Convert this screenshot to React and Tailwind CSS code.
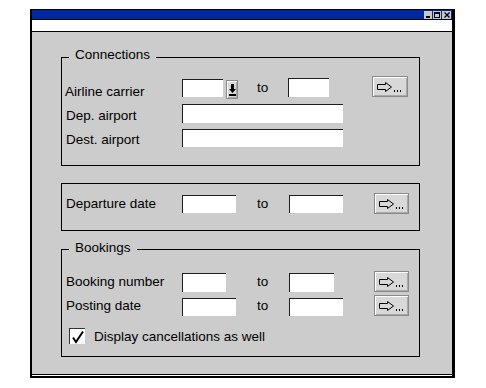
import React from "react";

function Field({ className }) {
  return <div className={"bg-white border-t border-l border-[#1e1e1e] shrink-0 " + className} />;
}

function ArrowBtn({ className = "" }) {
  return (
    <div
      className={
        "h-[21px] bg-[#d8d8d8] border border-[#8a8a8a] shadow-[inset_1px_1px_0_#ffffff,inset_-1px_-1px_0_#a9a9a9] flex items-start pl-[4px] pt-[5px] shrink-0 " +
        className
      }
    >
      <svg width="28" height="11" viewBox="0 0 28 11" shapeRendering="crispEdges">
        <path
          d="M0.5 2.5 H8.5 V0.5 L14.5 5 L8.5 9.5 V7.5 H0.5 Z"
          fill="none"
          stroke="#000"
          strokeWidth="1"
          shapeRendering="auto"
        />
        <rect x="17" y="8" width="1" height="2" fill="#000" />
        <rect x="20" y="8" width="1" height="2" fill="#000" />
        <rect x="23" y="8" width="1" height="2" fill="#000" />
      </svg>
    </div>
  );
}

function DropBtn() {
  return (
    <div className="ml-[3px] mb-[-2px] w-[12px] h-[19px] bg-[#d8d8d8] border border-[#8a8a8a] shadow-[inset_1px_1px_0_#ffffff,inset_-1px_-1px_0_#a9a9a9] flex items-center justify-center shrink-0">
      <svg width="7" height="12" viewBox="0 0 7 12" shapeRendering="crispEdges">
        <rect x="2" y="0" width="3" height="5" fill="#000" />
        <path d="M0 5 H7 L3.5 9 Z" fill="#000" shapeRendering="auto" />
        <rect x="0" y="10" width="7" height="2" fill="#000" />
      </svg>
    </div>
  );
}

function Legend({ children, className }) {
  return (
    <div
      className={
        "w-fit ml-[3px] px-[6px] bg-[#cccccc] leading-[14px] h-[14px] whitespace-nowrap " + className
      }
    >
      {children}
    </div>
  );
}

export default function App() {
  return (
    <div className="w-[486px] h-[388px] bg-white font-['Liberation_Sans',Arial,sans-serif] text-[13.5px] text-black pt-[9px] pl-[30px]">
      <div className="w-[425px] border-t border-l-2 border-r-[3px] border-b-2 border-black flex flex-col">
        {/* title bar */}
        <div className="h-[9px] bg-[#0028a0] flex items-center justify-end pr-[1px] gap-[1px]">
          <div className="w-[8px] h-[8px] bg-[#c8c8c8] flex items-end justify-center pb-[1px]">
            <div className="w-[4px] h-[2px] bg-black" />
          </div>
          <div className="w-[8px] h-[8px] bg-[#c8c8c8] flex items-center justify-center">
            <div className="w-[6px] h-[6px] border border-t-2 border-black" />
          </div>
          <div className="w-[9px] h-[8px] bg-[#c8c8c8] flex items-center justify-center">
            <svg width="6" height="6" viewBox="0 0 6 6">
              <path d="M0.5 0.5 L5.5 5.5 M5.5 0.5 L0.5 5.5" stroke="#000" strokeWidth="1.4" />
            </svg>
          </div>
        </div>
        <div className="h-px bg-black" />
        <div className="h-[11px] bg-white" />
        <div className="h-px bg-black" />

        {/* content */}
        <div className="h-[342px] bg-[#cccccc] pl-[29px] pt-[25px] flex flex-col">
          {/* Connections */}
          <div className="w-[359px] h-[109px] border border-black flex flex-col pl-[4px] shrink-0">
            <Legend className="-mt-[10px] -ml-[1px]">Connections</Legend>
            <div className="mt-[14px] h-[21px] flex items-end">
              <div className="w-[116px] leading-[14px] -ml-[1px] mr-[1px] -mb-[2px]">Airline carrier</div>
              <div className="w-[75px] flex items-end">
                <Field className="w-[41px] h-[18px]" />
                <DropBtn />
              </div>
              <div className="w-[31px] leading-[14px] mb-[2px]">to</div>
              <Field className="w-[41px] h-[19px]" />
              <div className="w-[43px]" />
              <ArrowBtn className="w-[36px]" />
            </div>
            <div className="mt-[7px] h-[19px] flex items-end">
              <div className="w-[116px] leading-[14px]">Dep. airport</div>
              <Field className="w-[161px] h-[19px]" />
            </div>
            <div className="mt-[6px] h-[18px] flex items-end">
              <div className="w-[116px] leading-[14px]">Dest. airport</div>
              <Field className="w-[161px] h-[18px]" />
            </div>
          </div>

          {/* Departure */}
          <div className="mt-[17px] w-[359px] h-[48px] border border-black flex flex-col pl-[4px] shrink-0">
            <div className="mt-[9px] h-[21px] flex items-center">
              <div className="w-[116px] leading-[14px]">Departure date</div>
              <div className="w-[75px]">
                <Field className="w-[54px] h-[18px] mt-[1px]" />
              </div>
              <div className="w-[32px] leading-[14px]">to</div>
              <div className="w-[85px]">
                <Field className="w-[54px] h-[18px] mt-[1px]" />
              </div>
              <ArrowBtn className="w-[35px]" />
            </div>
          </div>

          {/* Bookings */}
          <div className="mt-[18px] w-[359px] h-[108px] border border-black flex flex-col pl-[4px] shrink-0">
            <Legend className="-mt-[9px] -ml-[1px]">Bookings</Legend>
            <div className="mt-[16px] h-[21px] flex items-center">
              <div className="w-[116px] leading-[14px]">Booking number</div>
              <div className="w-[75px]">
                <Field className="w-[44px] h-[19px] mt-[1px]" />
              </div>
              <div className="w-[32px] leading-[14px]">to</div>
              <div className="w-[85px]">
                <Field className="w-[45px] h-[19px] mt-[1px]" />
              </div>
              <ArrowBtn className="w-[35px] -mt-[1px]" />
            </div>
            <div className="mt-[3px] h-[21px] flex items-center">
              <div className="w-[116px] leading-[14px]">Posting date</div>
              <div className="w-[75px]">
                <Field className="w-[54px] h-[18px] mt-[2px]" />
              </div>
              <div className="w-[32px] leading-[14px]">to</div>
              <div className="w-[85px]">
                <Field className="w-[54px] h-[18px] mt-[2px]" />
              </div>
              <ArrowBtn className="w-[35px] -mt-[1px]" />
            </div>
            <div className="mt-[12px] h-[16px] flex items-center">
              <div className="ml-[3px] w-[16px] h-[16px] bg-white border-t border-l border-[#333] flex items-center justify-center shrink-0">
                <svg width="14" height="14" viewBox="0 0 14 14">
                  <path d="M2 7.5 L5 12 L12 1.5" fill="none" stroke="#000" strokeWidth="2" />
                </svg>
              </div>
              <div className="ml-[9px] leading-[14px] mt-[1px]">Display cancellations as well</div>
            </div>
          </div>
        </div>

        <div className="h-px bg-black" />
        <div className="h-px bg-white" />
      </div>
    </div>
  );
}
